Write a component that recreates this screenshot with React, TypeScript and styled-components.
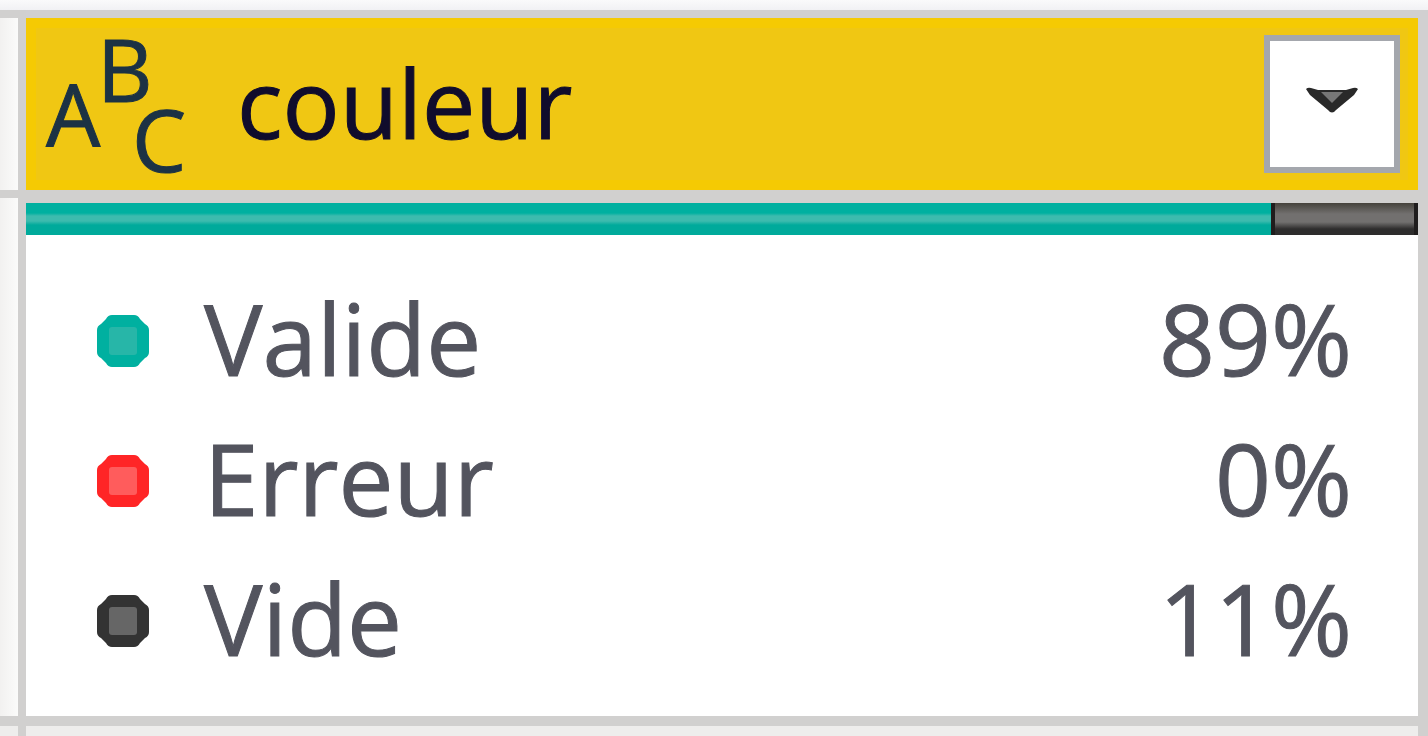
import React from "react";
import styled, { createGlobalStyle } from "styled-components";

const GlobalStyle = createGlobalStyle`
  * { box-sizing: border-box; }
  body {
    margin: 0;
    background: #eeedec;
    font-family: "Open Sans", "Noto Sans", sans-serif;
  }
`;

const Grid = styled.div`
  display: grid;
  grid-template-columns: 26px minmax(0, 1fr);
  grid-template-rows: auto auto 1fr;
  min-height: 100vh;
  padding-top: 10px;
  background: linear-gradient(#fafafb, #f1f1f4 10px, #eeedec 10px);
`;

const GutterCell = styled.div`
  background: linear-gradient(90deg, #f2f1f0, #fbfbfa);
  border: solid #d1d0cf;
  border-width: 8px 8px 0 0;
`;

const NextCell = styled.div<{ $edge: number }>`
  min-height: 20px;
  background: #eeedec;
  border: solid #d1d0cf;
  border-width: 10px ${(p) => p.$edge}px 0 0;
`;

const Header = styled.header`
  display: flex;
  align-items: center;
  height: 180px;
  padding: 0 18px 0 16px;
  border: solid #d1d0d1;
  border-width: 8px 10px 0 0;
  background: #f0c713;
  box-shadow: inset 0 0 0 10px #f5ca03;
`;

const TypeIcon = styled.svg`
  flex: none;
  width: 148px;
  height: 148px;
  overflow: visible;
  fill: #1c3244;
  stroke: #1c3244;
  font-family: "Open Sans", "Noto Sans", sans-serif;
  font-size: 86px;
`;

const Title = styled.h1`
  flex: 1;
  margin: 0;
  padding: 0 0 4px 47px;
  font-size: 95px;
  line-height: 130px;
  font-weight: 400;
  color: #100c2c;
  -webkit-text-stroke: 1px #100c2c;
`;

const MenuButton = styled.button`
  display: grid;
  place-items: center;
  width: 136px;
  height: 138px;
  padding: 0 0 8px;
  border: 6px solid #a4a7ad;
  background: #fff;
`;

const Quality = styled.section`
  border: solid #d1d0cf;
  border-width: 13px 10px 0 0;
  background: #fff;
`;

const Bar = styled.div`
  display: grid;
  grid-template-columns: 17fr 2fr;
  height: 32px;
`;

const ValidShare = styled.div`
  background: linear-gradient(#00b0a0 10px, #3dbbae 13px 18px, #00aa9b 22px);
`;

const EmptyShare = styled.div`
  border: solid #1f1d1d;
  border-width: 0 4px;
  background: linear-gradient(#45423b, #72706f 11px 19px, #2e2d2d 26px);
`;

const Stats = styled.dl`
  margin: 0;
  padding: 33px 66px 28px 71px;
`;

const Stat = styled.div`
  display: flex;
  align-items: baseline;
  height: 140px;
  font-size: 98px;
  line-height: 140px;
  color: #53545e;
  -webkit-text-stroke: 1px #53545e;
`;

const Dot = styled.svg`
  flex: none;
  align-self: center;
  width: 52px;
  height: 58px;
  padding-top: 6px;
`;

const Label = styled.dt`
  flex: 1;
  padding-left: 55px;
`;

const Value = styled.dd`
  margin: 0;
`;

const stats = [
  { label: "Valide", value: "89%", edge: "#00b0a0", core: "#27b6a8" },
  { label: "Erreur", value: "0%", edge: "#ff2526", core: "#ff5c5c" },
  { label: "Vide", value: "11%", edge: "#333333", core: "#666666" },
];

export default function App() {
  return (
    <>
      <GlobalStyle />
      <Grid>
        <GutterCell />
        <Header>
          <TypeIcon viewBox="0 0 148 148" role="img" aria-label="ABC">
            <text x="4" y="117">A</text>
            <text x="55" y="72">B</text>
            <text x="90" y="142">C</text>
          </TypeIcon>
          <Title>couleur</Title>
          <MenuButton type="button" aria-label="Menu couleur">
            <svg width="52" height="26" viewBox="0 0 52 26" aria-hidden="true">
              <path d="M0 2Q2 0 5 1L12 3H40L47 1Q50 0 52 2L48 8L30 23Q26 28 22 23L4 8Z" fill="#292929" />
              <path d="M15 5H37L26 16Z" fill="#777" />
            </svg>
          </MenuButton>
        </Header>
        <GutterCell />
        <Quality>
          <Bar>
            <ValidShare />
            <EmptyShare />
          </Bar>
          <Stats>
            {stats.map((s) => (
              <Stat key={s.label}>
                <Dot viewBox="0 0 52 52" aria-hidden="true">
                  <path
                    d="M15 0H37Q41 0 43 4L48 9Q52 11 52 15V37Q52 41 48 43L43 48Q41 52 37 52H15Q11 52 9 48L4 43Q0 41 0 37V15Q0 11 4 9L9 4Q11 0 15 0Z"
                    fill={s.edge}
                  />
                  <rect x="12" y="12" width="28" height="28" rx="3" fill={s.core} />
                </Dot>
                <Label>{s.label}</Label>
                <Value>{s.value}</Value>
              </Stat>
            ))}
          </Stats>
        </Quality>
        <NextCell $edge={8} />
        <NextCell $edge={10} />
      </Grid>
    </>
  );
}
